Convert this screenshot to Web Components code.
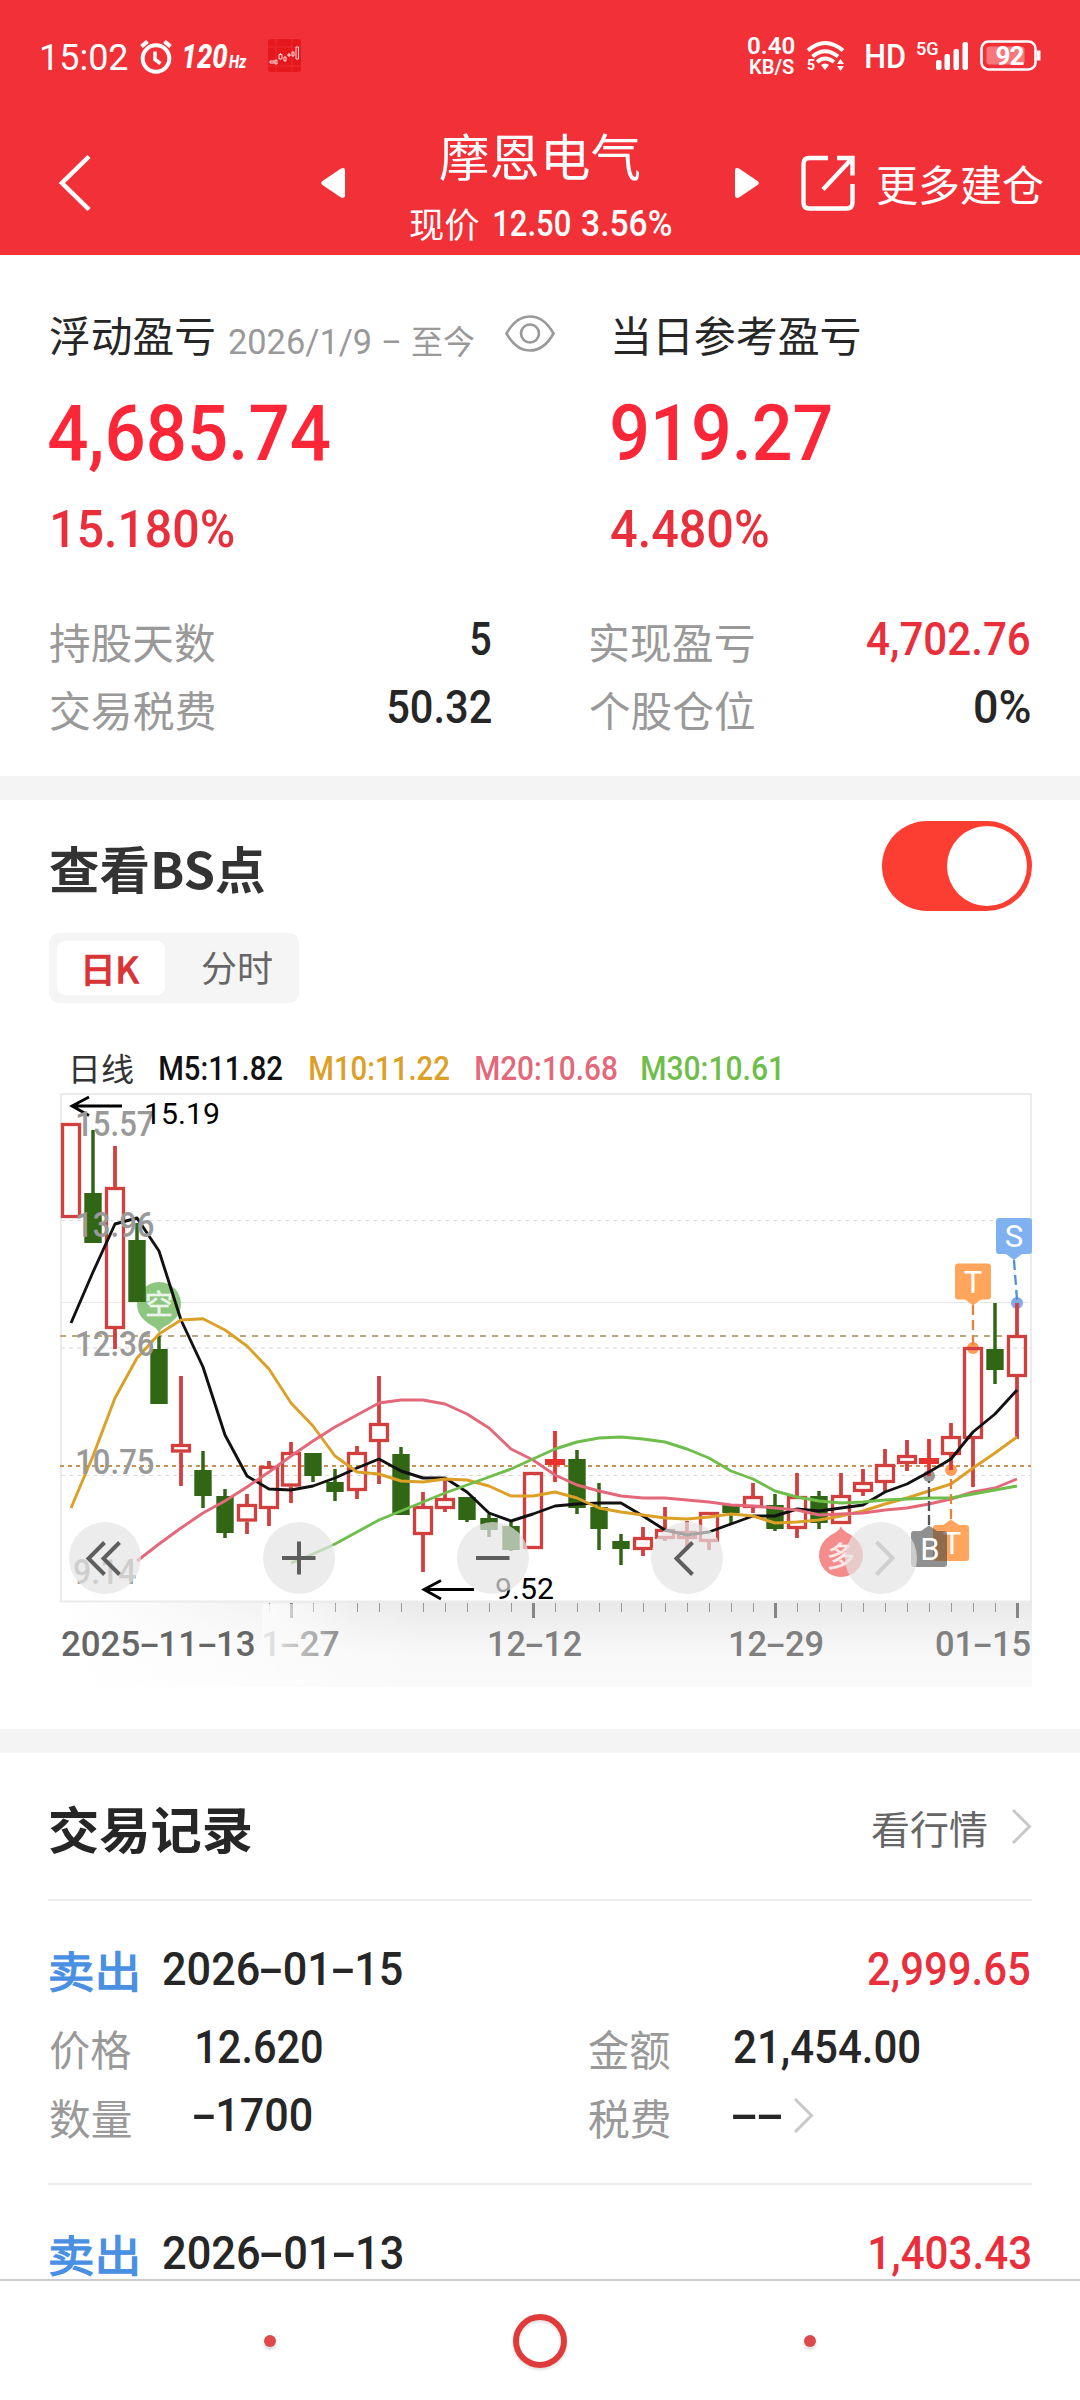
<!DOCTYPE html>
<html lang="zh-CN">
<head>
<meta charset="utf-8">
<title>摩恩电气</title>
<style>
html,body{margin:0;padding:0;background:#fff}
body{width:1080px;height:2400px;overflow:hidden;font-family:Roboto,"Noto Sans CJK SC",sans-serif}
</style>
</head>
<body>
<stock-app></stock-app>
<script>
const define = (name, html, after) => {
  const tpl = document.createElement('template');
  tpl.innerHTML = html;
  customElements.define(name, class extends HTMLElement {
    connectedCallback() {
      if (this.shadowRoot) return;
      this.attachShadow({mode: 'open'}).append(tpl.content.cloneNode(true));
      if (after) after.call(this, this.shadowRoot);
    }
  });
};

/* One line of text whose ink fills exactly `w` pixels; hyphens are drawn wide, as in DIN numerals. */
const ctx = document.createElement('canvas').getContext('2d');
customElements.define('fit-text', class extends HTMLElement {
  connectedCallback() {
    if (this.shadowRoot) return;
    const a = (n, d) => this.getAttribute(n) ?? d;
    const text = a('text', ''), s = +a('s', 40), wt = a('wt', '400'), w = +a('w', 100), dy = +a('dy', 0);
    const cjk = /[\u4e00-\u9fff]/.test(text);
    const fam = cjk ? '"Noto Sans CJK SC"' : 'Roboto';
    const it = this.hasAttribute('it') ? 'italic ' : '';
    ctx.font = `${it}${wt} ${s}px ${fam}, sans-serif`;
    const m = ctx.measureText(text), hy = ctx.measureText('-').width;
    const n = (text.match(/-/g) || []).length, hw = .52 * s;
    let left = -m.actualBoundingBoxLeft, right = m.actualBoundingBoxRight + n * (hw - hy);
    if (text[0] === '-') left = .05 * s;
    if (text.endsWith('-')) right = n * hw - .05 * s;
    const sc = w / (right - left);
    const h = cjk ? s : s * .711, ty = (cjk ? -.056 : .014) * s + dy;
    this.attachShadow({mode: 'open'}).innerHTML =
      `<style>:host{display:block;flex:none;width:${w}px;height:${h}px}
      span{display:block;width:max-content;white-space:pre;font:${it}${wt} ${s}px/${h}px ${fam},sans-serif;transform-origin:0 50%;
      transform:translate(${-left * sc}px,${ty}px) scaleX(${sc})}
      i{display:inline-block;font-style:normal;width:${hw}px;text-align:center;transform:scaleX(1.75)}</style><span>${text.replace(/-/g, '<i>-</i>')}</span>`;
  }
});

define('status-bar', `<style>
:host{display:flex;height:114px;align-items:center;color:#fff;box-sizing:border-box;padding-left:42px}
svg{display:block;flex:none}.sp{display:flex;flex-direction:column;align-items:flex-end;margin-left:447px;gap:5px;margin-top:-2px}
</style>
<fit-text text="15:02" s="36.5" w="86"></fit-text>
<svg width="32" height="34" viewBox="0 0 32 34" style="margin-left:12px;margin-top:-1px" fill="none" stroke="#fff" stroke-width="4"><circle cx="16" cy="18.5" r="13.3"/><path d="M15 11.5v8l5.5 4" stroke-width="3.6"/><path d="M1.5 6.5l6-5M30.500 6.500l-6-5" stroke-width="4.200"/></svg>
<fit-text text="120" s="34" wt="800" w="43.500" it dy="-1" style="margin-left:11.500px"></fit-text>
<fit-text text="Hz" s="18" wt="800" w="17.500" it dy="5" style="margin-left:2px"></fit-text>
<svg width="33" height="33" viewBox="0 0 33 33" style="margin-left:21px;margin-top:-3px"><rect width="33" height="33" rx="3" fill="#e5191d"/><path d="M0 8h33M0 27h33M8 0v33M24 0v33" stroke="#ea2c30"/><g stroke="#fff" fill="none" stroke-opacity=".85"><path d="M2 22h4v2H2zM7 21h2v4H7zM11 15.500h3V20h-3zM12.500 14v2M16 18h2v4h-2zM20 15h2v2h-2zM24 13h2v4h-2z"/><path d="M28 8h2.500v12H28z"/></g></svg>
<div class="sp"><fit-text text="0.40" s="24" wt="600" w="46.500"></fit-text><fit-text text="KB/S" s="20" wt="600" w="44"></fit-text></div>
<svg width="40" height="32" viewBox="0 0 40 32" style="margin-left:12px;margin-top:-2px" fill="none" stroke="#fff" stroke-width="4"><path d="M2 10.500Q19 -4.500 37 10.500M6.500 16.500Q19 6 32 16.500M11 22q8-7 17 0" /><path d="M15 25q4-3 8 0l-4 5z" fill="#fff" stroke="none"/><path d="M34.500 19l3.500 5h-7zM34.500 31l3.500-5h-7z" fill="#fff" stroke="none"/><text x="1" y="30" font-size="14" font-family="Roboto" font-weight="700" fill="#fff" stroke="none">5</text></svg>
<fit-text text="HD" s="34" wt="500" w="39" dy="-1" style="margin-left:19.500px"></fit-text>
<fit-text text="5G" s="18.500" wt="500" w="21" dy="-7" style="margin-left:12px"></fit-text>
<svg width="34" height="28" viewBox="0 0 34 28" style="margin-left:-2px;margin-top:-2px" fill="#fff"><rect x="0" y="18" width="5.500" height="10" rx="2"/><rect x="8.500" y="12" width="5.500" height="16" rx="2"/><rect x="17.500" y="7" width="5.500" height="21" rx="2"/><rect x="26.500" y="0" width="5.500" height="28" rx="2"/></svg>
<svg width="62" height="32" viewBox="0 0 62 32" style="margin-left:10px;margin-top:-2px"><rect x="1.500" y="1.500" width="54" height="28" rx="7" fill="none" stroke="#fff" stroke-width="2.600"/><path d="M57 10.500h3.500v10H57z" fill="#fff"/><rect x="6.500" y="6.500" width="38" height="18" rx="3" fill="#f9777c"/><text x="15.500" y="25" font-size="26" font-weight="700" font-family="Roboto" fill="#fff" textLength="29">92</text></svg>
`);

define('nav-header', `<style>
:host{display:flex;height:141px;align-items:center;color:#fff;box-sizing:border-box;padding:0 0 3px 59px}
svg{display:block;flex:none}.c{width:261px;margin:8px 64px 0 65px;display:flex;flex-direction:column;align-items:center;gap:24px}
.s{display:flex;align-items:center;height:36px}
</style>
<svg width="32" height="56" viewBox="0 0 32 56" fill="none" stroke="#fff" stroke-width="4.400" style="margin-right:230px"><path d="M30 1.500L3 28l27 26.500"/></svg>
<svg width="24" height="30" viewBox="0 0 24 30" fill="#fff"><path d="M1.500 13L20 .5q4-1.500 4 2v25q0 3.500-4 2L1.500 17q-2.500-2 0-4z"/></svg>
<div class="c"><fit-text text="摩恩电气" s="50" w="200" style="margin-left:-1px"></fit-text>
<div class="s"><fit-text text="现价" s="35" w="68.500"></fit-text><fit-text text="12.50" s="36" wt="500" w="76" style="margin-left:15px"></fit-text><fit-text text="3.56%" s="36" wt="500" w="89" style="margin-left:12.500px"></fit-text></div></div>
<svg width="24" height="30" viewBox="0 0 24 30" fill="#fff"><path d="M22.500 13L4 .5Q0-1 0 2.500v25Q0 31 4 29.500L22.500 17q2.500-2 0-4z"/></svg>
<svg width="54" height="56" viewBox="0 0 54 56" fill="none" stroke="#fff" stroke-width="4.400" style="margin:0 22px 0 42px"><path d="M27 3H8.500Q2.500 3 2.500 9v38.500q0 6 6 6h37q6 0 6-6V29M36 3h15.500v17.500M51.500 3L22 34.500"/></svg>
<fit-text text="更多建仓" s="42" w="166" dy="2"></fit-text>
`);

define('eye-icon', `<style>:host{display:block;flex:none}svg{display:block}</style><svg width="50" height="37" viewBox="0 0 50 37" fill="none" stroke="#999" stroke-width="2.600"><path d="M1.500 18.500Q11 1.500 25 1.500t23.500 17Q39 35.500 25 35.500T1.500 18.500z"/><circle cx="25" cy="18.500" r="9"/></svg>`);
define('arrow-icon', `<style>:host{display:block;flex:none}svg{display:block}</style><svg width="21" height="35" viewBox="0 0 21 35" fill="none" stroke="#c8c8c8" stroke-width="3"><path d="M2 1l16.500 16.500L2 34"/></svg>`);

define('profit-panel', `<style>
:host{display:block;height:521px;box-sizing:border-box;padding-top:57px;color:#262626}
.r{display:flex;align-items:center;height:40px}.g{color:#999}.red{color:#fb2638}.rd{color:#e92f3c}
</style>
<div class="r" style="height:50px;padding-left:49.500px">
<fit-text text="浮动盈亏" s="41.500" w="164.500"></fit-text>
<fit-text class="g" text="2026/1/9" s="35" w="141.500" dy="5.500" style="margin-left:15px"></fit-text>
<fit-text class="g" text="–" s="35" w="16" dy="5.500" style="margin-left:12px"></fit-text>
<fit-text class="g" text="至今" s="32.500" w="62.500" dy="4.500" style="margin-left:13px"></fit-text>
<eye-icon style="margin:0 59.500px 7px 30.500px"></eye-icon>
<fit-text text="当日参考盈亏" s="41.500" w="246"></fit-text></div>
<div class="r red" style="height:60px;margin-top:40.500px;padding-left:49px"><fit-text text="4,685.74" s="77.500" wt="500" w="281"></fit-text><fit-text text="919.27" s="77.500" wt="500" w="218.500" style="margin-left:282px"></fit-text></div>
<div class="r rd" style="margin-top:46.500px;padding-left:53px"><fit-text text="15.180%" s="52" wt="500" w="180"></fit-text><fit-text text="4.480%" s="52" wt="500" w="156.500" style="margin-left:378px"></fit-text></div>
<div class="r" style="margin-top:70.500px;padding-left:49.500px"><fit-text class="g" text="持股天数" s="41.500" w="165" dy="4.500"></fit-text><fit-text text="5" s="45.500" wt="500" w="20" style="margin-left:256px"></fit-text><fit-text class="g" text="实现盈亏" s="41.500" w="164" dy="4.500" style="margin-left:99.500px"></fit-text><fit-text class="rd" text="4,702.76" s="45.500" wt="500" w="163" style="margin-left:112.500px"></fit-text></div>
<div class="r" style="margin-top:28px;padding-left:49.500px"><fit-text class="g" text="交易税费" s="41.500" w="165" dy="4.500"></fit-text><fit-text text="50.32" s="45.500" wt="500" w="103.500" style="margin-left:173px"></fit-text><fit-text class="g" text="个股仓位" s="41.500" w="164" dy="4.500" style="margin-left:99px"></fit-text><fit-text text="0%" s="45.500" wt="500" w="55" style="margin-left:220.500px"></fit-text></div>
`);

define('toggle-switch', `<style>:host{display:flex;width:150px;height:90px;border-radius:45px;background:#fb3d32;align-items:center;justify-content:flex-end;box-sizing:border-box;padding-right:5px}i{width:80px;height:80px;border-radius:50%;background:#fff}</style><i></i>`);
define('seg-tabs', `<style>:host{display:flex;width:250px;height:70px;border-radius:10px;background:#f5f5f5;align-items:center;box-sizing:border-box;padding-left:8px;color:#666}
div{width:108px;height:54px;border-radius:8px;background:#fff;color:#d93436;display:flex;align-items:center;justify-content:center}</style>
<div><fit-text text="日K" s="35" wt="400" w="53" dy="1" style="margin-left:3px;-webkit-text-stroke:1.5px #d93436"></fit-text></div><fit-text text="分时" s="36" w="70" dy="0.500" style="margin-left:37px"></fit-text>`);

/* [type, body top, body bottom, high, low]; r hollow, s solid red, g green */
const C = [['r',1123,1218,1123,1218],['g',1193,1243,1130,1243],['r',1187,1329,1146,1349],['g',1240,1302,1223,1302],['g',1349,1404,1336,1404],['r',1444,1452.5,1376,1486],['g',1470,1496,1451,1508],['g',1496,1533,1489,1538],['r',1504,1521.5,1494,1534],['r',1466,1509,1461,1526],['r',1452,1486.5,1442,1503],['g',1453,1476,1453,1482],['g',1482,1492,1469,1501],['r',1452,1491,1446,1499],['r',1423,1442,1376,1484],['g',1454,1515,1447,1515],['r',1506,1535,1492,1572],['r',1498,1509,1480,1512],['g',1497,1520,1497,1522],['g',1518,1530,1514,1537],['g',1526,1550,1521,1551],['r',1472,1549,1472,1549],['s',1459,1465,1431,1482],['g',1459,1508,1450,1514],['g',1507,1529,1483,1550],['g',1541,1549,1534,1565],['r',1537,1550,1527,1556],['r',1529,1539,1507,1541],['r',1531,1539,1521,1550],['r',1512,1542,1512,1550],['g',1505,1513,1505,1524],['r',1496,1508,1483,1513],['g',1505,1529,1494,1531],['r',1496,1529,1473,1538],['g',1496,1523,1491,1529],['r',1495,1524,1473,1524],['r',1482,1492,1469,1496],['r',1464,1483,1449,1491],['r',1455,1464,1440,1471],['s',1458,1464,1439,1476],['r',1436,1455,1423,1470],['r',1347,1439,1347,1487],['g',1349,1370,1303,1384],['r',1335,1377,1303,1439]];
const MA = [
 ['#111',0,[1323,1272,1224,1218,1251,1320,1367,1435,1476,1489,1490,1486,1478,1468,1459,1471,1478,1478,1492,1513,1521,1514,1506,1504,1503,1503,1516,1530,1535,1532,1524,1516,1516,1509,1511,1508,1505,1492,1484,1472,1459,1432,1414,1390]],
 ['#dca027',0,[1508,1456,1398,1358,1334,1320,1318.7,1330,1346,1369,1403,1426,1456,1472,1474,1481,1482,1479,1480,1486,1496,1496,1492,1498,1508,1512,1515,1518,1519,1517,1514,1516,1523,1522,1520,1516,1511,1504,1498,1491,1484,1468,1453,1437]],
 ['#e2687a',3,[1561,1544,1528,1513,1501,1487,1472,1456,1441,1427,1415,1403,1400,1400,1404,1414,1428,1449,1460,1475,1485,1491,1496,1498,1498,1500,1502,1505,1506,1508,1510,1515,1514,1513,1510,1508,1504,1499,1492,1488,1479]],
 ['#6fbd4b',10,[1563,1554,1544,1532,1520,1511,1502,1493,1485,1477,1469,1459,1449,1442,1438,1437,1439,1442,1449,1458,1471,1479,1491,1497,1501,1503,1502,1500,1499,1498,1498,1494,1490,1486]]];
const X = i => 71 + 22 * i;

define('k-chart', `<style>
:host{display:block;position:relative;width:1080px;height:600px;isolation:isolate}
svg{display:block}.a{position:absolute}
.band{position:absolute;left:61px;top:517px;width:971px;height:85px;background:linear-gradient(90deg,#fff 0,#fff0 38%),linear-gradient(#e9e9e9,#f8f8f8 60%,#fafafa);z-index:-1}
.fade{position:absolute;left:262px;top:519px;width:90px;height:60px;background:linear-gradient(90deg,#fbfbfbe0 0,#fbfbfb90 35%,#fbfbfb00)}
.ax{color:#999}.d{color:#808080}
</style>
<div class="band"></div>
<svg width="1080" height="602" viewBox="0 1085 1080 602"></svg>
<fit-text class="a ax" style="left:77px;top:26.500px" text="15.57" s="34.500" wt="500" w="77"></fit-text>
<fit-text class="a ax" style="left:77px;top:128px" text="13.96" s="34.500" wt="500" w="77"></fit-text>
<fit-text class="a ax" style="left:77px;top:246.500px" text="12.36" s="34.500" wt="500" w="77"></fit-text>
<fit-text class="a ax" style="left:77px;top:365px" text="10.75" s="34.500" wt="500" w="77"></fit-text>
<fit-text class="a ax" style="left:73.500px;top:475px" text="9.14" s="34.500" wt="500" w="62"></fit-text>
<fit-text class="a" style="left:145.500px;top:18px;color:#000" text="15.19" s="30" w="72"></fit-text>
<fit-text class="a" style="left:496px;top:493px;color:#000" text="9.52" s="30" w="57"></fit-text>
<fit-text class="a d" style="left:262.500px;top:547px" text="1-27" s="35.500" wt="500" w="75.500"></fit-text>
<div class="fade"></div>
<fit-text class="a" style="left:61.500px;top:547px;color:#666" text="2025-11-13" s="35.500" wt="500" w="192.500"></fit-text>
<fit-text class="a d" style="left:488.500px;top:547px" text="12-12" s="35.500" wt="500" w="92"></fit-text>
<fit-text class="a d" style="left:730px;top:547px" text="12-29" s="35.500" wt="500" w="93"></fit-text>
<fit-text class="a d" style="left:936px;top:547px" text="01-15" s="35.500" wt="500" w="94"></fit-text>
<svg class="a" style="left:0;top:0" id="btn" width="1080" height="600" viewBox="0 1085 1080 600"></svg>
`, function (root) {
  let o = `<g fill="none"><rect x="61" y="1094" width="970" height="507.500" fill="#fff" stroke="#ebebeb" stroke-width="2"/>
  <path d="M61 1220.500H1031M61 1475.500H1031" stroke="#dcdcdc" stroke-dasharray="4 4"/><path d="M61 1302.500H1031" stroke="#e8e8e8"/>
  <path d="M61 1348H1031" stroke="#e9e9e9" stroke-width="2" stroke-dasharray="4 4"/>
  <path d="M60 1336H1003" stroke="#b9a97c" stroke-width="2" stroke-dasharray="6 6"/>
  <path d="M60 1466H1031" stroke="#c8935a" stroke-width="2" stroke-dasharray="4 4"/></g>`;
  const pin = (x, y, up, col, ch) => `<path d="${up ? `M${x} ${y - 30}c2 6 8 7 12 10.500a22 22 0 1 1-24 0c4-3.500 10-4.500 12-10.500z` : `M${x} ${y + 29}c-2-6-8-7-12-10.500a22 22 0 1 1 24 0c-4 3.500-10 4.500-12 10.500z`}" fill="${col}"/><text x="${x}" y="${y + 10.500}" text-anchor="middle" font-size="28" font-family="Noto Sans CJK SC" fill="#fff" fill-opacity=".8" stroke="#fff" stroke-opacity=".5" stroke-width="1">${ch}</text>`;
  o += pin(159, 1304, false, '#8cc67f', '空') + pin(841, 1556, true, '#f58c8c', '多');
  o += `<circle cx="973" cy="1348" r="6" fill="#ff9d57"/><circle cx="1017" cy="1303" r="6" fill="#82aae6"/><circle cx="929" cy="1476" r="6" fill="#999"/><circle cx="951" cy="1470" r="6" fill="#ff9d57"/>`;
  C.forEach(([t, a, b, h, l], i) => {
    const x = X(i), c = t === 'g' ? '#306614' : t === 's' ? '#e83230' : '#d13f3f', w = t === 'g' ? 3.5 : 3.8;
    if (h < a) o += `<path d="M${x} ${h}V${a}" stroke="${c}" stroke-width="${w}"/>`;
    if (l > b) o += `<path d="M${x} ${b}V${l}" stroke="${c}" stroke-width="${w}"/>`;
    if (t === 'r') o += `<rect x="${x - 8.500}" y="${a + 1.5}" width="17" height="${b - a - 3}" fill="none" stroke="${c}" stroke-width="3.300"/>`;
    else o += `<rect x="${x - (t === 'g' ? 8.700 : 10)}" y="${a}" width="${t === 'g' ? 17.4 : 20}" height="${b - a}" fill="${c}"/>`;
  });
  MA.forEach(([c, s, v]) => o += `<polyline fill="none" stroke="${c}" stroke-width="2.900" stroke-linejoin="round" points="${v.map((y, i) => X(i + s) + ',' + y).join(' ')}"/>`);
  o += `<g fill="none" stroke="#000" stroke-width="2.800"><path d="M122 1106H72M89 1097l-17 9 17 9.500M474 1589.500H424M441 1580.500l-17 9 17 9.500"/></g>`;
  const tag = (x, y, up, col, ch, tx = x) => `<path d="M${x - 15} ${y}h30q3 0 3 3v30q0 3-3 3h-30q-3 0-3-3v-30q0-3 3-3z${up ? `M${x - 8} ${y}l8-5.500 8 5.500z` : `M${x - 8} ${y + 36}l8 6 8-6z`}" fill="${col}"/><text x="${tx}" y="${y + 29}" text-anchor="middle" font-size="31" font-family="Roboto" fill="#fff">${ch}</text>`;
  o += `<path d="M973 1305V1347M951 1519V1479" stroke="#df843a" stroke-width="2.300" stroke-dasharray="10 5"/><path d="M1014 1260L1017 1300" stroke="#4f90da" stroke-width="2.300" stroke-dasharray="10 5"/><path d="M929 1525V1481" stroke="#555" stroke-width="2.300" stroke-dasharray="10 4"/>`;
  o += tag(973, 1263.5, false, '#ffa55c', 'T') + tag(1014, 1218, false, '#7fb0f0', 'S') + tag(951, 1525, true, '#ffa55c', 'T', 952) + tag(929, 1531, true, 'rgba(70,70,70,.6)', 'B', 930);
  for (let i = 9; i < 44; i++) o += i % 11 === 10 ? `<path d="M${X(i) + .5} 1603V1618" stroke="#858585" stroke-width="3"/>` : `<path d="M${X(i) + .5} 1603V1612" stroke="#999"/>`;
  root.querySelector('svg').innerHTML = o;
  let b = '';
  for (const x of [105, 299, 493, 687, 881]) b += `<circle cx="${x}" cy="1558" r="36" fill="#e4e4e4" fill-opacity=".7"/>`;
  b += `<g fill="none" stroke="#5e5e5e" stroke-width="4"><path d="M104.500 1542.500l-16 16 16 16M119.500 1542.500l-16 16 16 16M282 1558h33.500M299 1541.500v33M476 1558h33.500M692.500 1542.500l-16 16 16 16"/><path d="M876.500 1542l16 16-16 16.500" stroke="#cfcfcf"/></g>`;
  root.querySelector('#btn').innerHTML = b;
});

define('chart-panel', `<style>
:host{display:block;height:929px}
.h{display:flex;justify-content:space-between;align-items:center;height:90px;margin:21px 48px 0 50px;color:#333}
seg-tabs{margin:22px 0 0 49px}.l{display:flex;align-items:center;height:32px;padding-left:72px;margin-top:51px}
k-chart{margin-top:-1px}
</style>
<div class="h"><fit-text text="查看BS点" s="50" wt="700" w="214.500" dy="3.500"></fit-text><toggle-switch></toggle-switch></div>
<seg-tabs></seg-tabs>
<div class="l"><fit-text text="日线" s="31.500" w="60.500" style="color:#333;margin-left:1px"></fit-text><fit-text text="M5:11.82" s="32.500" wt="500" w="122.500" style="margin-left:26.500px;color:#111"></fit-text><fit-text text="M10:11.22" s="32.500" wt="500" w="139.500" style="margin-left:27px;color:#dca027"></fit-text><fit-text text="M20:10.68" s="32.500" wt="500" w="140.500" style="margin-left:26.500px;color:#e2687a"></fit-text><fit-text text="M30:10.61" s="32.500" wt="500" w="138" style="margin-left:26px;color:#6fbd4b"></fit-text></div>
<k-chart></k-chart>
`);

define('trade-item', `<style>
:host{display:block;height:284px;margin:0 48px;border-top:2px solid #ededed;box-sizing:border-box;padding:48px 2px 0 1.500px;color:#262626}
.r{display:flex;align-items:center;height:40px}.g{color:#999}
</style>`, function (root) {
  const a = n => this.getAttribute(n);
  root.innerHTML += `<div class="r"><fit-text text="卖出" s="43.500" wt="400" w="86.500" dy="3.500" style="color:#4a90e2;-webkit-text-stroke:1.300px #4a90e2"></fit-text><fit-text text="${a('date')}" s="45.500" wt="500" w="239.500" style="margin-left:27px"></fit-text><fit-text text="${a('amount')}" s="45.500" wt="500" w="${a('aw')}" style="margin-left:auto;color:#e92f3c"></fit-text></div>
  <div class="r" style="margin-top:38px"><fit-text class="g" text="价格" s="41.500" w="81" dy="4.500"></fit-text><fit-text text="12.620" s="45.500" wt="500" w="125" style="margin-left:66px"></fit-text><fit-text class="g" text="金额" s="41.500" w="81" dy="4.500" style="margin-left:267.500px"></fit-text><fit-text text="21,454.00" s="45.500" wt="500" w="185.500" style="margin-left:64px"></fit-text></div>
  <div class="r" style="margin-top:28.500px"><fit-text class="g" text="数量" s="41.500" w="81" dy="4"></fit-text><fit-text text="-1700" s="45.500" wt="500" w="116.500" style="margin-left:64px"></fit-text><fit-text class="g" text="税费" s="41.500" w="81" dy="4" style="margin-left:278px"></fit-text><fit-text text="--" s="45.500" wt="500" w="46" style="margin-left:64px"></fit-text><arrow-icon style="margin-left:13px"></arrow-icon></div>`;
});

define('trade-list', `<style>
:host{display:block;height:526px;overflow:hidden}
.h{display:flex;align-items:center;height:60px;padding:46px 48px 40px 49.500px;color:#262626}
</style>
<div class="h"><fit-text text="交易记录" s="50.500" wt="700" w="201.500" dy=".5"></fit-text><fit-text text="看行情" s="38.500" w="114.500" style="margin-left:auto;color:#666"></fit-text><arrow-icon style="margin:-6px 0 0 24.500px"></arrow-icon></div>
<trade-item date="2026-01-15" amount="2,999.65" aw="162"></trade-item>
<trade-item date="2026-01-13" amount="1,403.43" aw="160.500"></trade-item>
`);

define('sys-nav', `<style>
:host{display:flex;height:121px;border-top:2px solid #ccc;box-sizing:border-box;justify-content:space-between;align-items:center;padding:0 264px;background:#fff;position:relative}
i{width:12px;height:12px;border-radius:50%;background:#de4a4c;box-shadow:0 3px 3px #0002}b{width:42px;height:42px;border:6px solid #e03b3b;border-radius:50%;box-shadow:0 2px 3px #0002,inset 0 2px 3px #0002}
</style><i></i><b></b><i></i>`);

define('stock-app', `<style>
:host{display:flex;flex-direction:column;width:1080px;height:2400px;overflow:hidden;background:#fff}
header{background:#f23038}hr{margin:0;border:0;height:24px;background:#f4f4f4}header,hr,:host>*{flex:none}
</style>
<header><status-bar></status-bar><nav-header></nav-header></header>
<profit-panel></profit-panel><hr><chart-panel></chart-panel><hr><trade-list></trade-list><sys-nav></sys-nav>`);
</script>
</body>
</html>
